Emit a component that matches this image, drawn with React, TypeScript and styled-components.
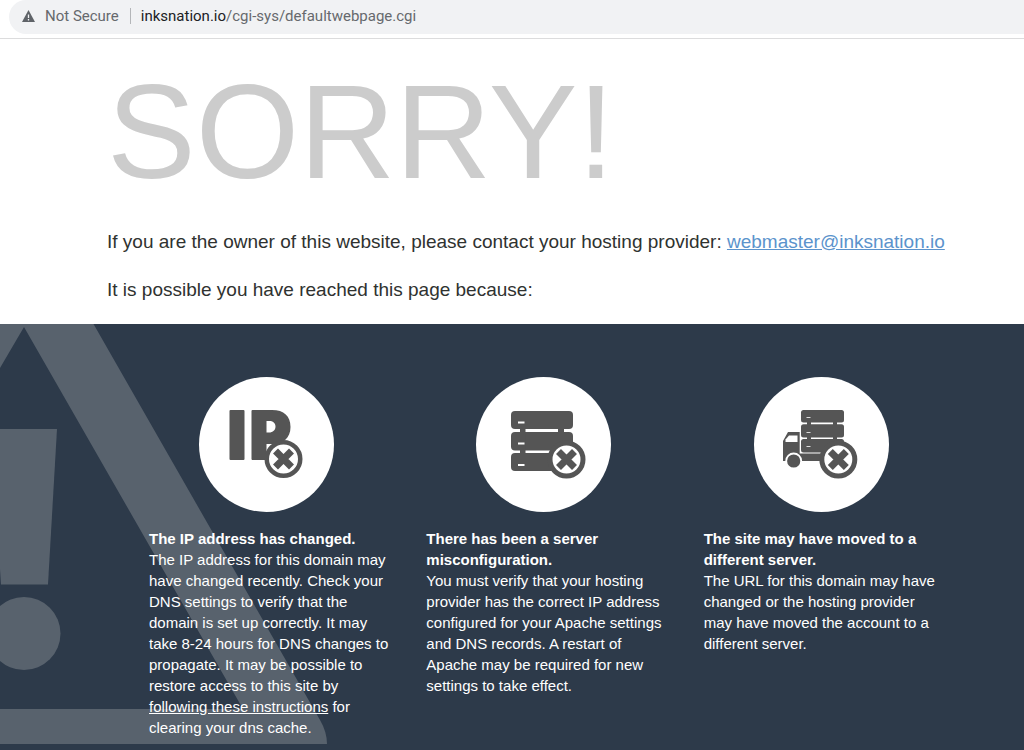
import React from "react";
import styled, { createGlobalStyle } from "styled-components";

const GlobalStyle = createGlobalStyle`
  *, *::before, *::after { box-sizing: border-box; }
  body {
    margin: 0;
    background: #ffffff;
    color: #2f3230;
    font-family: "Liberation Sans", Arial, Helvetica, sans-serif;
  }
  h1, h2, p { margin: 0; }
`;

const Page = styled.div`
  display: flex;
  flex-direction: column;
  min-height: 100vh;
`;

const AddressRow = styled.header`
  height: 39px;
  padding-left: 9px;
  border-bottom: 1px solid #dcdcdd;
`;

const AddressBar = styled.div`
  display: flex;
  align-items: center;
  height: 34px;
  padding: 0 12px 2px;
  border-radius: 17px 0 0 17px;
  background: #f1f2f4;
  color: #66696d;
  font-family: Roboto, "Liberation Sans", sans-serif;
  font-size: 15px;
  line-height: 16px;
`;

const SecurityLabel = styled.span`
  margin-left: 9px;
  padding-right: 11px;
  border-right: 1px solid #b4b6b9;
`;

const Address = styled.span`
  margin-left: 10px;
`;

const Host = styled.span`
  color: #202124;
`;

const Intro = styled.main`
  padding: 19px 40px 22px 107px;
`;

const Title = styled.h1`
  color: #cccccc;
  font-size: 133px;
  font-weight: 400;
  line-height: 148px;
`;

const Lead = styled.p`
  margin-top: 24px;
  font-size: 19px;
  line-height: 24px;
`;

const ContactLink = styled.a`
  color: #5b93cc;
`;

const Reasons = styled.section`
  position: relative;
  flex: 1;
  overflow: hidden;
  padding: 53px 85px 12px 149px;
  background: #2d3a4a;
  color: #ffffff;
`;

const Watermark = styled.svg`
  position: absolute;
  top: 0;
  left: 0;
`;

const ReasonGrid = styled.div`
  position: relative;
  display: grid;
  grid-template-columns: repeat(3, 1fr);
  gap: 42px;
  max-width: 790px;
`;

const Reason = styled.article`
  display: flex;
  flex-direction: column;
`;

const ReasonIcon = styled.svg`
  align-self: center;
  margin-bottom: 16px;
`;

const ReasonTitle = styled.h2`
  font-size: 15px;
  font-weight: 700;
  line-height: 21px;
`;

const ReasonText = styled.p`
  margin-right: -8px;
  font-size: 15px;
  line-height: 21px;
`;

const ReasonLink = styled.a`
  color: inherit;
`;

const INK = "#555555";

function WarningIcon() {
  return (
    <svg width="15" height="14" viewBox="0 0 15 14" aria-hidden="true">
      <path d="M7.500 1L14 13H1Z" fill="#5f6368" />
      <path d="M7.500 5.500v3.500M7.500 10v1.500" stroke="#f1f2f4" strokeWidth="1.300" />
    </svg>
  );
}

function CrossBadge({ x, y, stroke }: { x: number; y: number; stroke: number }) {
  return (
    <g transform={`translate(${x} ${y})`} stroke={INK}>
      <circle r={19 - stroke / 2} fill="#fff" strokeWidth={stroke} />
      <path d="M-8 -8L8 8M8 -8L-8 8" strokeWidth="7" />
    </g>
  );
}

function IpIcon() {
  return (
    <ReasonIcon width="135" height="135" viewBox="0 0 135 135" aria-hidden="true">
      <circle cx="67.500" cy="67.500" r="67.500" fill="#fff" />
      <rect x="30.500" y="33" width="15" height="50" rx="1" fill={INK} />
      <path
        d="M53.500 33H73C85 33 91.500 39 91.500 50C91.500 61 84 67 73 67H67.500V83H53.500Q52.500 83 52.500 82V34Q52.500 33 53.500 33ZM67.500 44V55.500H70C74 55.500 76.500 53 76.500 49.500C76.500 46 74 44 70 44Z"
        fill={INK}
        fillRule="evenodd"
      />
      <CrossBadge x={84.500} y={82} stroke={4.500} />
    </ReasonIcon>
  );
}

function ServerIcon() {
  return (
    <ReasonIcon width="135" height="135" viewBox="0 0 135 135" aria-hidden="true">
      <circle cx="67.500" cy="67.500" r="67.500" fill="#fff" />
      <g fill={INK}>
        <rect x="35" y="34" width="62" height="18" rx="4" />
        <rect x="35" y="55" width="62" height="18.500" rx="4" />
        <rect x="35" y="76" width="62" height="18" rx="4" />
        <path d="M44 51h5.500v26h-5.500zM82 51h6v26h-6z" />
      </g>
      <path d="M42 45.500h6.500M42 66.500h6.500M42 88h6.500" stroke="#fff" strokeWidth="2" />
      <CrossBadge x={90.500} y={82.500} stroke={5} />
    </ReasonIcon>
  );
}

function TruckIcon() {
  return (
    <ReasonIcon width="135" height="135" viewBox="0 0 135 135" aria-hidden="true">
      <circle cx="67.500" cy="67.500" r="67.500" fill="#fff" />
      <g fill={INK}>
        <rect x="47" y="33" width="43" height="12.500" rx="2.500" />
        <rect x="47" y="47.200" width="43" height="13.300" rx="2.500" />
        <rect x="47" y="62" width="43" height="13.500" rx="2.500" />
        <path d="M53 45h4v19h-4zM79 45h4v19h-4z" />
        <path d="M34 55H45.700V76.500H70V84H29V64Z" />
      </g>
      <path d="M35 58.500H43.500V65H31.500V62.500Z" fill="#fff" />
      <path d="M52.500 40.500h4M52.500 55.500h4M52.500 69.500h4" stroke="#ddd" strokeWidth="1.200" />
      <circle cx="39.700" cy="84" r="7.500" fill={INK} stroke="#fff" strokeWidth="1.800" />
      <CrossBadge x={84.300} y={82.500} stroke={5} />
    </ReasonIcon>
  );
}

export default function App() {
  return (
    <>
      <GlobalStyle />
      <Page>
        <AddressRow>
          <AddressBar>
            <WarningIcon />
            <SecurityLabel>Not Secure</SecurityLabel>
            <Address>
              <Host>inksnation.io</Host>/cgi-sys/defaultwebpage.cgi
            </Address>
          </AddressBar>
        </AddressRow>
        <Intro>
          <Title>SORRY!</Title>
          <Lead>
            If you are the owner of this website, please contact your hosting provider:{" "}
            <ContactLink href="mailto:webmaster@inksnation.io">webmaster@inksnation.io</ContactLink>
          </Lead>
          <Lead>It is possible you have reached this page because:</Lead>
        </Intro>
        <Reasons>
          <Watermark width="330" height="420" viewBox="0 0 330 420" fill="#58626d" aria-hidden="true">
            <path
              fillRule="evenodd"
              d="M-10 0H93.500L320 396Q327 408 327 420H-10ZM24 3L-10 61V385H243Z"
            />
            <path d="M-9 105H57L48 260.500H1Z" />
            <circle cx="24" cy="309.500" r="36.500" />
          </Watermark>
          <ReasonGrid>
            <Reason>
              <IpIcon />
              <ReasonTitle>The IP address has changed.</ReasonTitle>
              <ReasonText>
                The IP address for this domain may have changed recently. Check your DNS settings to
                verify that the domain is set up correctly. It may take 8-24 hours for DNS changes to
                propagate. It may be possible to restore access to this site by{" "}
                <ReasonLink href="#dns-cache">following these instructions</ReasonLink> for clearing
                your dns cache.
              </ReasonText>
            </Reason>
            <Reason>
              <ServerIcon />
              <ReasonTitle>There has been a server misconfiguration.</ReasonTitle>
              <ReasonText>
                You must verify that your hosting provider has the correct IP address configured for
                your Apache settings and DNS records. A restart of Apache may be required for new
                settings to take effect.
              </ReasonText>
            </Reason>
            <Reason>
              <TruckIcon />
              <ReasonTitle>The site may have moved to a different server.</ReasonTitle>
              <ReasonText>
                The URL for this domain may have changed or the hosting provider may have moved the
                account to a different server.
              </ReasonText>
            </Reason>
          </ReasonGrid>
        </Reasons>
      </Page>
    </>
  );
}
